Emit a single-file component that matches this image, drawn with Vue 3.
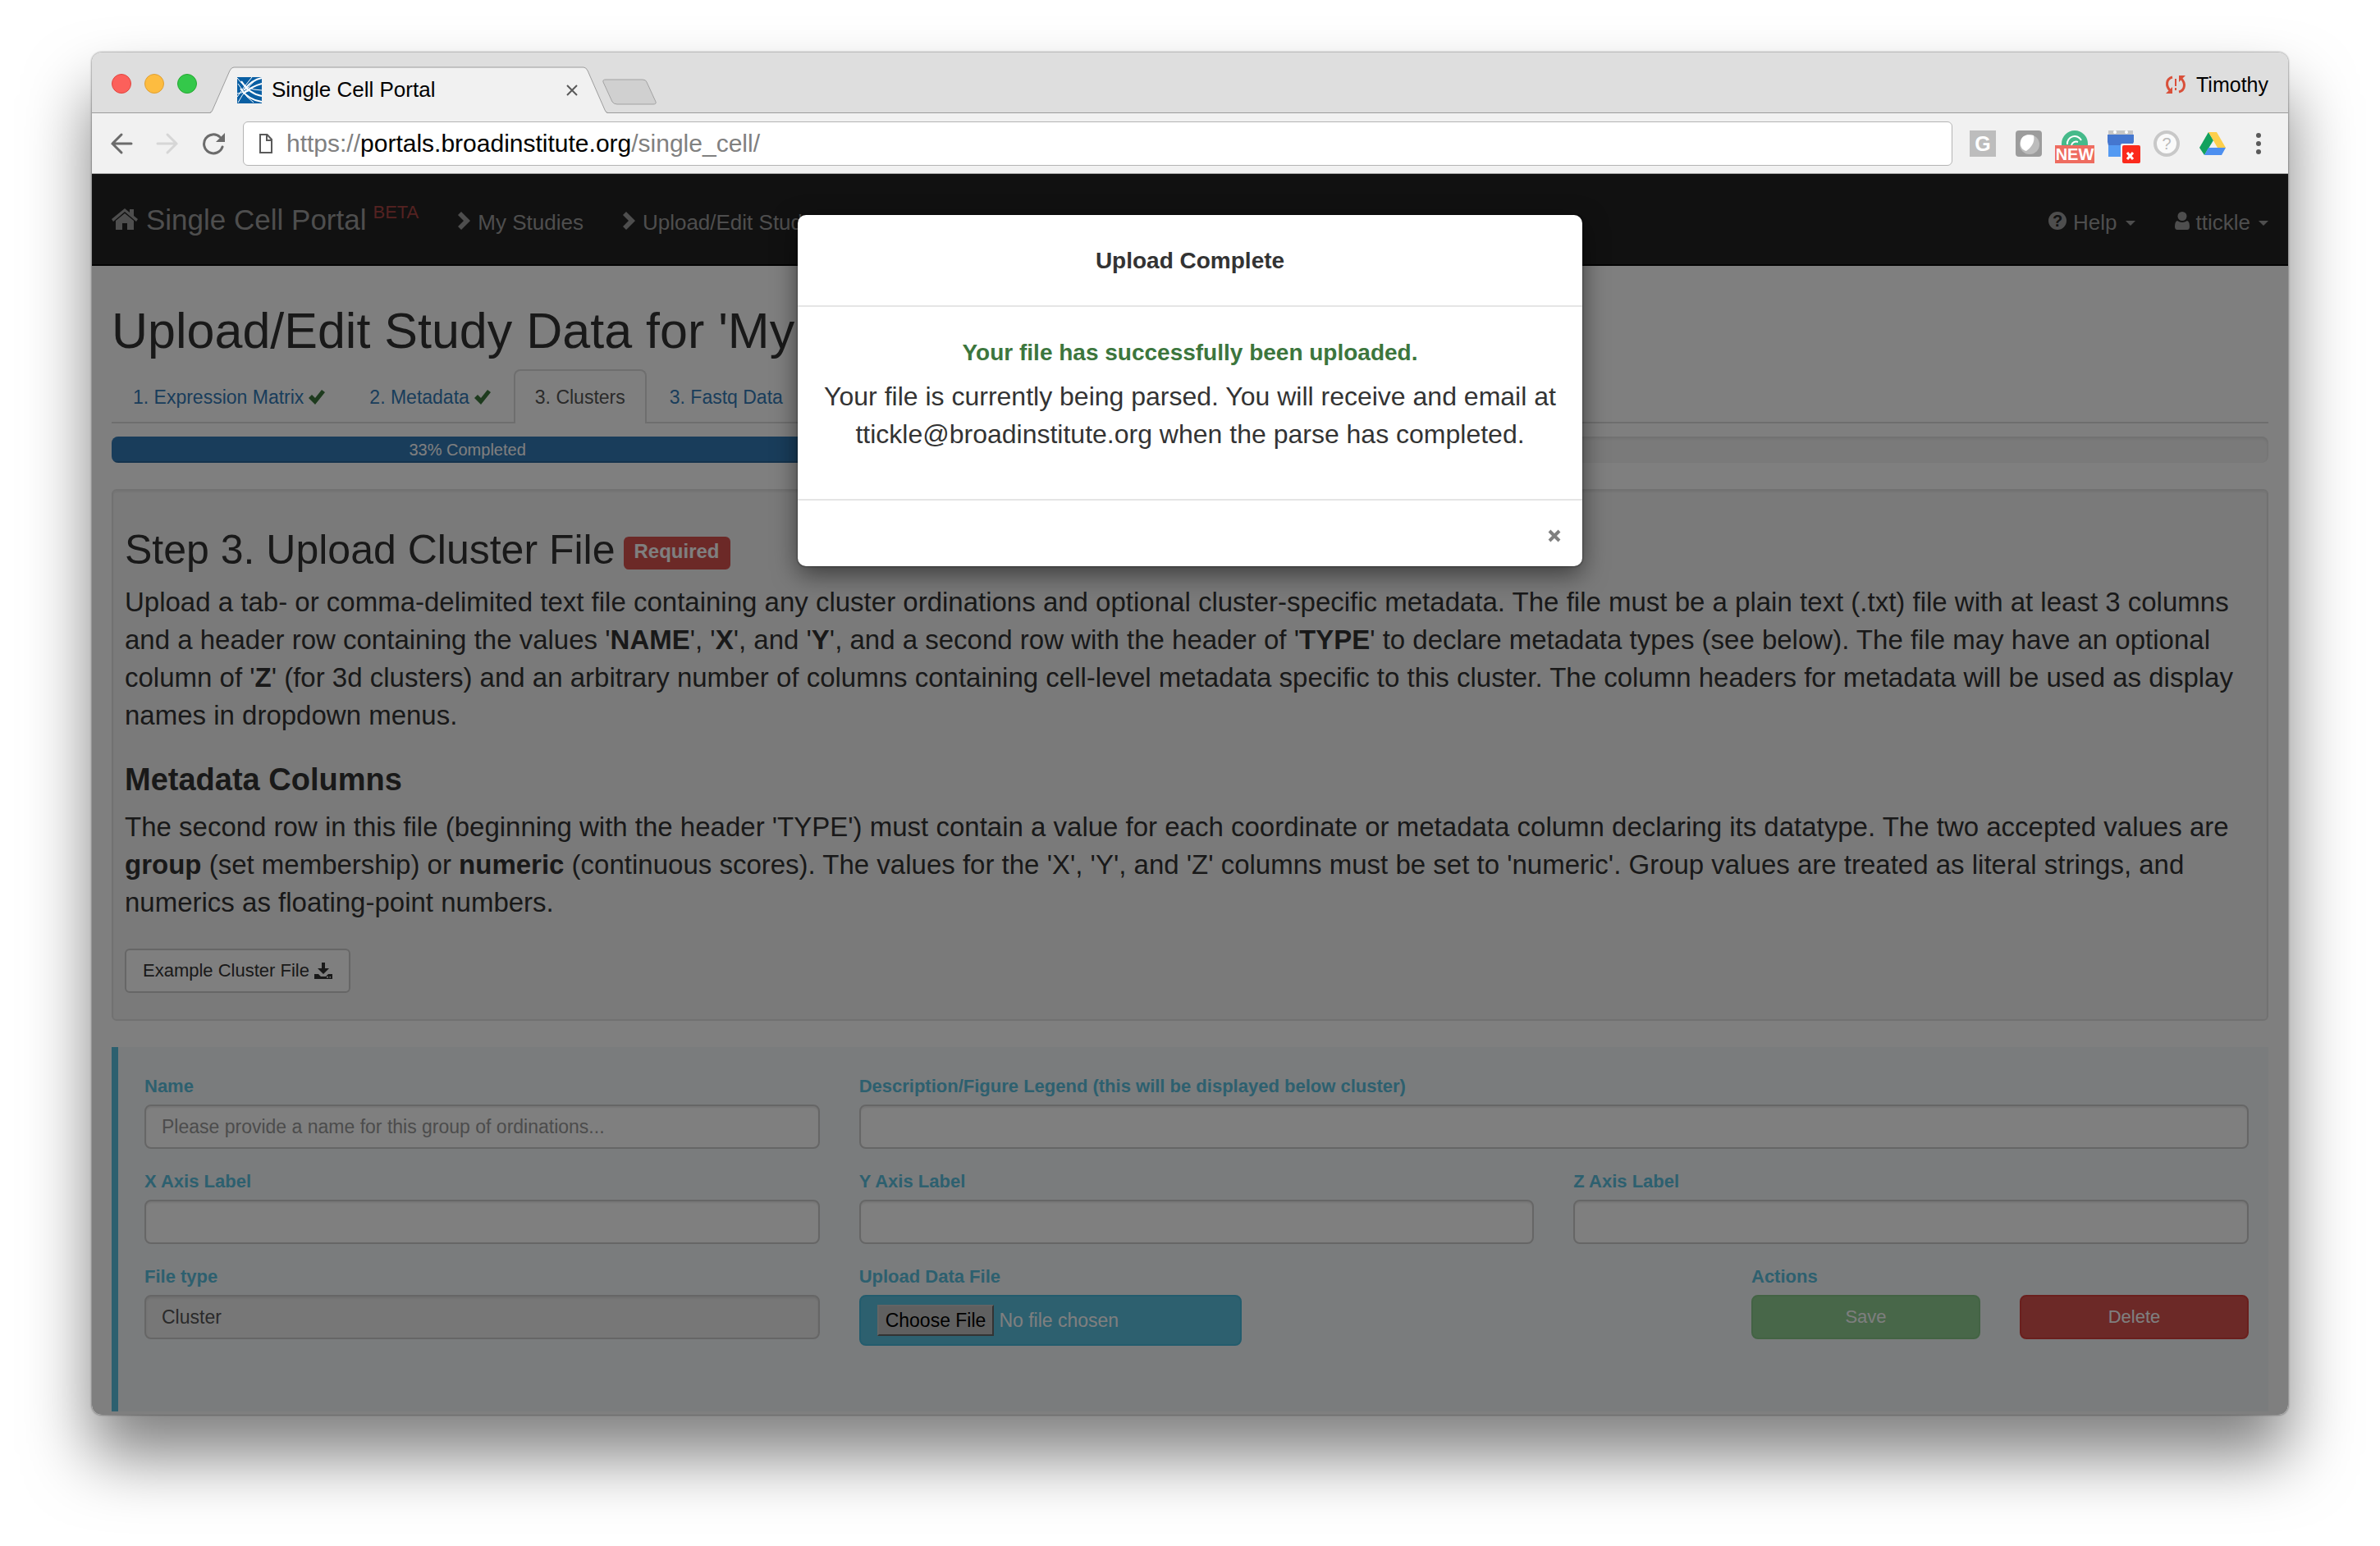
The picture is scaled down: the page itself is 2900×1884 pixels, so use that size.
<script setup>
import { ref } from 'vue'

const modalOpen = ref(true)
const progress = 33
const tabs = [
  { label: '1. Expression Matrix', done: true },
  { label: '2. Metadata', done: true },
  { label: '3. Clusters', active: true },
  { label: '3. Fastq Data' },
]
</script>

<template>
  <div class="desktop">
    <div class="window">
      <header class="tabstrip">
        <div class="lights">
          <button class="light red" aria-label="Close window"></button>
          <button class="light yellow" aria-label="Minimize window"></button>
          <button class="light green" aria-label="Zoom window"></button>
        </div>
        <div class="browser-tab">
          <svg class="tab-shape" viewBox="0 0 484 57" aria-hidden="true">
            <path d="M0 57 Q2 56 3 53 L24 5 Q26 1 29 1 H455 Q458 1 460 5 L481 53 Q482 56 484 57Z" fill="#f1f1f1" />
            <path d="M0 56 Q2 56 3 53 L24 5 Q26 1 29 1 H455 Q458 1 460 5 L481 53 Q482 56 484 56" fill="none" stroke="#9c9c9c" />
          </svg>
          <svg class="favicon" width="30" height="32" viewBox="0 0 30 32" aria-hidden="true">
            <rect width="30" height="32" fill="#0a5fa3" />
            <g fill="none" stroke="#fff">
              <path stroke-width="2" d="M4 14Q14 28 30 30M5 5Q14 20 30 23" />
              <path stroke-width="2" d="M8 16Q18 3 30 1M8 20Q18 11 30 8" />
              <path d="M0 1Q10 16 30 16M1 31Q10 14 22 4M0 24Q8 12 18 0M1 8 12 24 20 31M0 20 14 17" />
            </g>
          </svg>
          <span class="tab-title">Single Cell Portal</span>
          <button class="tab-close" aria-label="Close tab">
            <svg width="16" height="16" viewBox="0 0 16 16"><path d="M2 2 14 14M14 2 2 14" stroke="#5a5a5a" stroke-width="2" /></svg>
          </button>
        </div>
        <button class="new-tab" aria-label="New tab">
          <svg width="66" height="33" viewBox="0 0 66 33"><path d="M4 1H49Q53 1 54 4L65 28Q66 31 62 31H18Q14 31 12 28L1 4Q0 1 4 1Z" fill="#d0d0d0" stroke="#a2a2a2" /></svg>
        </button>
        <div class="profile">
          <svg width="26" height="24" viewBox="0 0 26 24" aria-hidden="true">
            <path d="M9 3C1 5 1 14 6 19M17 21C25 19 25 10 20 5" fill="none" stroke="#d9503a" stroke-width="3" />
            <path d="M1 23H9V15ZM25 1H17V9Z" fill="#d9503a" />
            <path d="M12 5H14V14H12ZM12 16H14V19H12Z" fill="#d9503a" />
          </svg>
          <span>Timothy</span>
        </div>
      </header>

      <div class="toolbar">
        <button class="tool" aria-label="Back">
          <svg width="28" height="28" viewBox="0 0 28 28"><path d="M26 14H3M14 3 3 14 14 25" fill="none" stroke="#6b6b6b" stroke-width="3" stroke-linecap="round" /></svg>
        </button>
        <button class="tool" aria-label="Forward">
          <svg width="28" height="28" viewBox="0 0 28 28"><path d="M2 14H25M14 3 25 14 14 25" fill="none" stroke="#d6d6d6" stroke-width="3" stroke-linecap="round" /></svg>
        </button>
        <button class="tool" aria-label="Reload">
          <svg width="28" height="28" viewBox="0 0 28 28"><path d="M22 6A11.500 11.500 0 1 0 25 18" fill="none" stroke="#6b6b6b" stroke-width="3" stroke-linecap="round" /><path d="M28 1V12H17Z" fill="#6b6b6b" /></svg>
        </button>
        <div class="address">
          <svg width="18" height="26" viewBox="0 0 18 26" aria-hidden="true"><path d="M2 2H10.500L16 8V24H2ZM10 2V9H16" fill="none" stroke="#5a5a5a" stroke-width="2" /></svg>
          <span class="url">https://<b>portals.broadinstitute.org</b>/single_cell/</span>
        </div>
        <div class="extensions">
          <span class="tile">G</span>
          <svg width="32" height="32" viewBox="0 0 32 32" aria-hidden="true">
            <rect width="32" height="32" rx="4" fill="#9c9c9c" />
            <circle cx="17" cy="17" r="12" fill="#bcbcbc" />
            <path d="M6 14C7 6 14 4 22 6C24 14 19 21 13 25C8 24 5 19 6 14Z" fill="#fff" />
          </svg>
          <div class="ext">
            <svg width="32" height="32" viewBox="0 0 32 32" aria-hidden="true">
              <path d="M0 16A16 16 0 0 1 32 16V20H0Z" fill="#45ba8a" />
              <path d="M7 17A9 9 0 0 1 24 12M12 18A6 6 0 0 1 20 14" fill="none" stroke="#fff" stroke-width="2" />
            </svg>
            <span class="badge new">NEW</span>
          </div>
          <div class="ext">
            <svg width="32" height="32" viewBox="0 0 32 32" aria-hidden="true">
              <path d="M1 0H31V6H1Z" fill="#c6c6c6" />
              <circle cx="9" cy="2" r="2" fill="#fff" /><circle cx="23" cy="2" r="2" fill="#fff" />
              <path d="M0 5H32V14L30 18V32H1V18L0 14Z" fill="#4577cf" />
              <path d="M1 18H30V32H1Z" fill="#549af2" />
              <path d="M16 18Q16 16 18 16H32V32H16Z" fill="#f1f1f1" />
            </svg>
            <span class="badge off"><svg width="22" height="22" viewBox="0 0 22 22"><path d="M6 9 13 17M13 9 6 17" stroke="#fff" stroke-width="3" /></svg></span>
          </div>
          <span class="tile round">?</span>
          <svg width="32" height="32" viewBox="0 0 32 32" aria-hidden="true">
            <path d="M11 2 0 21 6 30 17 12Z" fill="#12a15e" />
            <path d="M11 2H21L32 21H22Z" fill="#fdcf4b" />
            <path d="M11 21H32L27 30H6Z" fill="#4d8ff0" />
          </svg>
          <button class="menu" aria-label="Browser menu">
            <svg width="10" height="28" viewBox="0 0 10 28"><g fill="#5a5a5a"><circle cx="5" cy="4" r="3" /><circle cx="5" cy="14" r="3" /><circle cx="5" cy="24" r="3" /></g></svg>
          </button>
        </div>
      </div>

      <div class="page">
        <nav class="navbar">
          <a class="brand" href="#">
            <svg class="home" width="32" height="26" viewBox="0 0 32 26" aria-hidden="true">
              <path d="M16 0 0 13 2 16 16 4 30 16 32 13 27 9V1H22V5Z" />
              <path d="M16 6 5 15V26H13V18H19V26H27V15Z" />
            </svg>
            <span>Single Cell Portal</span>
            <span class="beta">BETA</span>
          </a>
          <a class="nav-link" href="#"><svg class="chev" width="16" height="22" viewBox="0 0 16 22" aria-hidden="true"><path d="M4 0 0 4 7 11 0 18 4 22 15 11Z" /></svg><span>My Studies</span></a>
          <a class="nav-link" href="#"><svg class="chev" width="16" height="22" viewBox="0 0 16 22" aria-hidden="true"><path d="M4 0 0 4 7 11 0 18 4 22 15 11Z" /></svg><span>Upload/Edit Study Data</span></a>
          <a class="nav-link help" href="#">
            <svg width="22" height="22" viewBox="0 0 22 22" aria-hidden="true">
              <circle cx="11" cy="11" r="11" />
              <text x="11" y="18" text-anchor="middle" font-size="20" font-weight="700" fill="#222">?</text>
            </svg><span>Help</span><i class="caret"></i>
          </a>
          <a class="nav-link user" href="#">
            <svg width="18" height="22" viewBox="0 0 18 22" aria-hidden="true">
              <circle cx="9" cy="5.500" r="5.500" />
              <path d="M3 11Q0 12 0 18Q0 22 3 22H15Q18 22 18 18Q18 12 15 11Q9 15 3 11Z" />
            </svg><span>ttickle</span><i class="caret"></i>
          </a>
        </nav>

        <main class="content">
          <h1>Upload/Edit Study Data for 'My Study'</h1>
          <ul class="steps">
            <li v-for="tab in tabs" :key="tab.label">
              <a href="#" :class="{ active: tab.active }"><span>{{ tab.label }}</span><svg v-if="tab.done" width="20" height="18" viewBox="0 0 20 18" aria-hidden="true"><path d="M0 10 4 6 8 10 16 0 20 3 8 18Z" fill="#3c763d" /></svg></a>
            </li>
          </ul>
          <div class="progress"><div class="bar" :style="{ width: progress + '%' }">{{ progress }}% Completed</div></div>

          <section class="well">
            <h2>Step 3. Upload Cluster File <span class="required">Required</span></h2>
            <p>Upload a tab- or comma-delimited text file containing any cluster ordinations and optional cluster-specific metadata. The file must be a plain text (.txt) file with at least 3 columns and a header row containing the values '<strong>NAME</strong>', '<strong>X</strong>', and '<strong>Y</strong>', and a second row with the header of '<strong>TYPE</strong>' to declare metadata types (see below). The file may have an optional column of '<strong>Z</strong>' (for 3d clusters) and an arbitrary number of columns containing cell-level metadata specific to this cluster. The column headers for metadata will be used as display names in dropdown menus.</p>
            <h3>Metadata Columns</h3>
            <p>The second row in this file (beginning with the header 'TYPE') must contain a value for each coordinate or metadata column declaring its datatype. The two accepted values are <strong>group</strong> (set membership) or <strong>numeric</strong> (continuous scores). The values for the 'X', 'Y', and 'Z' columns must be set to 'numeric'. Group values are treated as literal strings, and numerics as floating-point numbers.</p>
            <a class="example" href="#"><span>Example Cluster File</span><svg width="22" height="20" viewBox="0 0 22 20" aria-hidden="true"><path d="M9 0H13V7H18L11 14 4 7H9ZM0 14H5L8 17H14L17 14H22V20H0Z" fill="#333" /><path d="M15 17H17V18.500H15ZM18.500 17H20V18.500H18.500Z" fill="#fff" /></svg></a>
          </section>

          <form class="cluster-form" @submit.prevent>
            <div class="field">
              <label for="name">Name</label>
              <input id="name" class="control" type="text" placeholder="Please provide a name for this group of ordinations..." />
            </div>
            <div class="field wide">
              <label for="description">Description/Figure Legend (this will be displayed below cluster)</label>
              <input id="description" class="control" type="text" />
            </div>
            <div class="field">
              <label for="x-axis">X Axis Label</label>
              <input id="x-axis" class="control" type="text" />
            </div>
            <div class="field">
              <label for="y-axis">Y Axis Label</label>
              <input id="y-axis" class="control" type="text" />
            </div>
            <div class="field">
              <label for="z-axis">Z Axis Label</label>
              <input id="z-axis" class="control" type="text" />
            </div>
            <div class="field">
              <label for="file-type">File type</label>
              <input id="file-type" class="control" type="text" value="Cluster" readonly />
            </div>
            <div class="field">
              <label for="upload">Upload Data File</label>
              <input id="upload" class="upload" type="file" />
            </div>
            <div class="field actions">
              <span class="label">Actions</span>
              <div class="buttons">
                <button class="btn save" type="submit">Save</button>
                <button class="btn delete" type="button">Delete</button>
              </div>
            </div>
          </form>
        </main>

        <div v-if="modalOpen" class="backdrop">
          <div class="modal" role="dialog" aria-labelledby="modal-title">
            <h4 id="modal-title">Upload Complete</h4>
            <div class="modal-body">
              <strong>Your file has successfully been uploaded.</strong>
              <p>Your file is currently being parsed. You will receive and email at ttickle@broadinstitute.org when the parse has completed.</p>
            </div>
            <div class="modal-footer">
              <button aria-label="Close" @click="modalOpen = false">
                <svg width="16" height="16" viewBox="0 0 16 16"><path d="M2 2 14 14M14 2 2 14" stroke="#808080" stroke-width="4" /></svg>
              </button>
            </div>
          </div>
        </div>
      </div>
    </div>
  </div>
</template>

<style>
body {
  margin: 0;
  background: #fff;
}
</style>

<style scoped>
* {
  box-sizing: border-box;
}
button {
  border: 0;
  padding: 0;
  background: none;
  font-family: inherit;
}
svg {
  display: block;
  flex: none;
}
h1, h2, h3, h4, p, ul {
  margin: 0;
  padding: 0;
}
a {
  text-decoration: none;
}
.desktop {
  min-height: 100vh;
  padding: 64px 112px;
  overflow: hidden;
  font-family: "Liberation Sans", Arial, sans-serif;
  color: #333;
}
.window {
  border-radius: 12px;
  overflow: hidden;
  box-shadow: 0 50px 80px rgba(0, 0, 0, 0.5), 0 0 2px 1px rgba(0, 0, 0, 0.3);
}

/* Browser chrome */
.tabstrip {
  display: flex;
  align-items: center;
  height: 74px;
  padding: 2px 24px 0;
  background: #dedede;
  box-shadow: inset 0 -1px #9c9c9c;
}
.lights {
  display: flex;
  gap: 16px;
}
.light {
  width: 24px;
  height: 24px;
  border-radius: 50%;
  border: 1px solid #e2463f;
  background: #fc605b;
}
.light.yellow {
  border-color: #dfa033;
  background: #fdbc40;
}
.light.green {
  border-color: #27a833;
  background: #34c84a;
}
.browser-tab {
  position: relative;
  display: flex;
  align-items: center;
  align-self: flex-end;
  width: 484px;
  height: 57px;
  margin-left: 16px;
  padding: 0 35px 0 33px;
}
.tab-shape {
  position: absolute;
  inset: 0;
}
.favicon {
  position: relative;
}
.tab-title {
  position: relative;
  flex: 1;
  margin-left: 12px;
  font-size: 26px;
  color: #000;
}
.tab-close {
  position: relative;
}
.new-tab {
  margin-left: -6px;
  margin-top: 20px;
}
.profile {
  display: flex;
  align-items: center;
  gap: 12px;
  margin-top: 2px;
  margin-left: auto;
  font-size: 25px;
  color: #000;
}
.toolbar {
  display: flex;
  align-items: center;
  height: 74px;
  padding: 0 31px 0 22px;
  background: #f1f1f1;
  border-bottom: 1px solid #a8a8a8;
}
.tool {
  margin-right: 28px;
}
.address {
  display: flex;
  align-items: center;
  flex: 1;
  gap: 16px;
  height: 54px;
  margin-left: -6px;
  padding: 0 18px;
  border: 1px solid #b4b4b4;
  border-radius: 6px;
  background: #fff;
}
.url {
  font-size: 30px;
  color: #808080;
}
.url b {
  font-weight: 400;
  color: #000;
}
.extensions {
  display: flex;
  align-items: center;
  gap: 24px;
  margin-left: 21px;
}
.ext {
  position: relative;
}
.tile {
  width: 32px;
  height: 32px;
  background: #bdbdbd;
  color: #fff;
  font-size: 25px;
  font-weight: 700;
  line-height: 32px;
  text-align: center;
}
.tile.round {
  border: 4px solid #c8c8c8;
  border-radius: 50%;
  background: #fafafa;
  color: #bbb;
  font-size: 20px;
  font-weight: 400;
  line-height: 24px;
}
.badge {
  position: absolute;
  top: 18px;
  height: 22px;
  color: #fff;
}
.badge.new {
  left: -8px;
  width: 48px;
  background: #ee6c60;
  font-size: 20px;
  font-weight: 700;
  line-height: 22px;
  text-align: center;
}
.badge.off {
  left: 18px;
  width: 22px;
  border-radius: 2px;
  background: #fb2a1c;
}
.menu {
  margin-left: 11px;
}

/* Portal page */
.page {
  position: relative;
  padding-bottom: 4px;
  background: #fff;
}
.navbar {
  display: flex;
  align-items: baseline;
  height: 112px;
  padding: 36px 24px 0;
  background: #222;
  border-bottom: 2px solid #080808;
}
.brand,
.nav-link {
  display: flex;
  align-items: baseline;
  gap: 8px;
  color: #9d9d9d;
  fill: #9d9d9d;
  font-size: 26px;
  white-space: nowrap;
}
.brand {
  font-size: 35px;
}
.home {
  margin-right: 2px;
}
.beta {
  position: relative;
  top: -14px;
  color: #a94442;
  font-size: 22px;
}
.nav-link {
  margin-left: 48px;
}
.help {
  margin-left: auto;
}
.caret {
  align-self: center;
  margin-left: 2px;
  border: 6px solid transparent;
  border-top-color: #9d9d9d;
  border-bottom: 0;
}
.content {
  padding: 46px 24px 0;
}
h1 {
  margin-bottom: 14px;
  font-size: 61px;
  font-weight: 400;
  line-height: 66px;
}
.steps {
  display: flex;
  gap: 2px;
  border-bottom: 2px solid #ddd;
  list-style: none;
}
.steps li {
  margin-bottom: -2px;
}
.steps a {
  display: flex;
  align-items: center;
  gap: 6px;
  padding: 16px 24px;
  border: 2px solid transparent;
  border-bottom: 0;
  border-radius: 8px 8px 0 0;
  font-size: 23px;
  line-height: 32px;
  color: #337ab7;
}
.steps a.active {
  border-color: #ddd;
  background: #fff;
  color: #555;
}
.progress {
  height: 32px;
  margin: 16px 0 32px;
  border-radius: 8px;
  overflow: hidden;
  background: #f5f5f5;
  box-shadow: inset 0 2px 4px rgba(0, 0, 0, 0.1);
}
.bar {
  height: 100%;
  background: #337ab7;
  box-shadow: inset 0 -2px rgba(0, 0, 0, 0.15);
  color: #fff;
  font-size: 20px;
  line-height: 32px;
  text-align: center;
}
.well {
  padding: 45px 14px 32px;
  border: 2px solid #e3e3e3;
  border-radius: 6px;
  background: #f5f5f5;
  box-shadow: inset 0 2px 2px rgba(0, 0, 0, 0.05);
}
h2 {
  display: flex;
  gap: 10px;
  margin-bottom: 14px;
  font-size: 50px;
  font-weight: 400;
  line-height: 54px;
}
.required {
  height: 40px;
  margin-top: 11px;
  padding: 0 13px;
  border-radius: 6px;
  background: #d9534f;
  color: #fff;
  font-size: 24px;
  font-weight: 700;
  line-height: 36px;
}
p {
  font-size: 33px;
  line-height: 46px;
}
h3 {
  margin: 34px 0 14px;
  font-size: 38px;
  line-height: 42px;
}
.example {
  display: inline-flex;
  align-items: center;
  gap: 6px;
  height: 54px;
  margin-top: 33px;
  padding: 0 20px;
  border: 2px solid #ccc;
  border-radius: 6px;
  background: #fff;
  color: #333;
  font-size: 22px;
  vertical-align: top;
}
.cluster-form {
  display: grid;
  grid-template-columns: repeat(3, 1fr);
  gap: 24px 48px;
  margin-top: 32px;
  padding: 32px 24px 80px 32px;
  border-left: 8px solid #5bc0de;
  background: #f4f8fa;
}
.wide {
  grid-column: span 2;
}
.field {
  display: flex;
  flex-direction: column;
  gap: 6px;
}
label,
.label {
  color: #5bc0de;
  font-size: 22px;
  font-weight: 700;
  line-height: 32px;
}
.control {
  width: 100%;
  height: 54px;
  padding: 0 19px;
  border: 2px solid #ccc;
  border-radius: 8px;
  background: #fff;
  box-shadow: inset 0 2px 2px rgba(0, 0, 0, 0.08);
  color: #555;
  font-family: inherit;
  font-size: 23px;
}
.control::placeholder {
  color: #999;
}
.control:read-only {
  background: #eee;
}
.upload {
  width: 466px;
  height: 62px;
  padding: 10px 20px;
  border: 2px solid #46b8da;
  border-radius: 8px;
  background: #5bc0de;
  color: #fff;
  font-family: inherit;
  font-size: 23px;
}
.upload::file-selector-button {
  height: 38px;
  margin: 0 6px 0 0;
  padding: 0 8px;
  border: 2px solid;
  border-color: #c8c8c8 #666 #666 #c8c8c8;
  background: #c0c0c0;
  color: #000;
  font-family: inherit;
  font-size: 23px;
}
.actions {
  width: 606px;
  margin-left: auto;
}
.buttons {
  display: flex;
  gap: 48px;
}
.btn {
  flex: 1;
  height: 54px;
  border: 2px solid #d43f3a;
  border-radius: 8px;
  background: #d9534f;
  color: #fff;
  font-size: 22px;
}
.save {
  border-color: #4cae4c;
  background: #5cb85c;
  opacity: 0.65;
}

/* Upload dialog */
.backdrop {
  position: absolute;
  inset: 0;
  padding-top: 50px;
  background: rgba(0, 0, 0, 0.5);
}
.modal {
  width: 956px;
  margin: 0 auto;
  border-radius: 10px;
  background: #fff;
  box-shadow: 0 10px 30px rgba(0, 0, 0, 0.5), 0 0 2px 1px rgba(0, 0, 0, 0.3);
  text-align: center;
}
h4 {
  padding: 36px 0 34px;
  border-bottom: 2px solid #e5e5e5;
  font-size: 28px;
  line-height: 40px;
}
.modal-body {
  padding: 34px 24px 56px;
}
.modal-body p {
  font-size: 32px;
}
.modal-body strong {
  display: block;
  margin-bottom: 8px;
  color: #3c763d;
  font-size: 28px;
  line-height: 44px;
}
.modal-footer {
  display: flex;
  justify-content: flex-end;
  padding: 35px 26px 29px;
  border-top: 2px solid #e5e5e5;
}
</style>
